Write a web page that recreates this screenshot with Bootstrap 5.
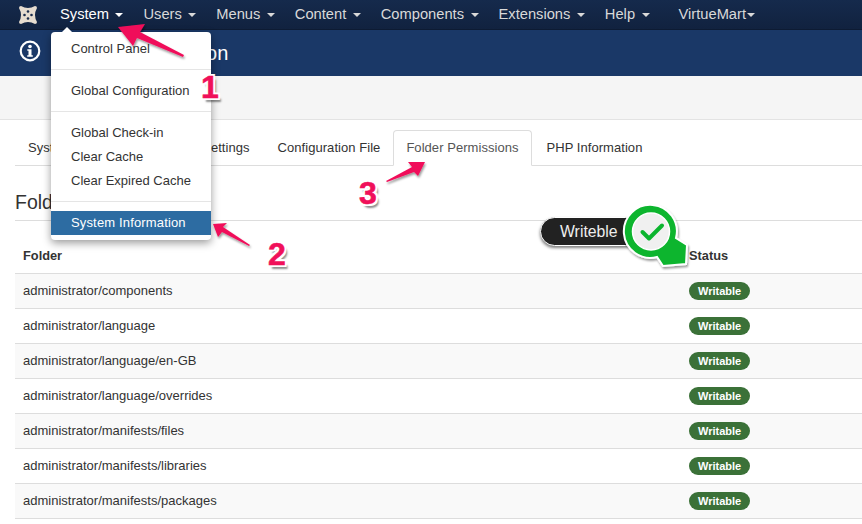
<!DOCTYPE html>
<html>
<head>
  <title>System Information</title>
  <link rel="stylesheet" href="https://cdn.jsdelivr.net/npm/bootstrap@5.3.0/dist/css/bootstrap.min.css">
  <style>
    html, body { height: 524px; overflow: hidden; }
    body { font-family: "Liberation Sans", Arial, sans-serif; font-size: 13px; color: #333; background: #fff; position: relative; }
    .top-bar { height: 30px; background: linear-gradient(#152a4c, #11223f); border-bottom: 1px solid #0d1b33; padding-left: 17px; }
    .top-bar .brand-mark { width: 22px; height: 22px; margin-right: 11px; }
    .top-link { color: #d9d9d9; font-size: 14.7px; line-height: 29px; padding: 0 10px; white-space: nowrap; text-decoration: none; }
    .top-link.is-open { color: #fff; }
    .top-link i { display: inline-block; border: 4px solid transparent; border-top-color: currentColor; border-bottom: 0; margin-left: 2.4px; vertical-align: 2px; }
    .top-link.vm { margin-left: 9px; }
    .top-link.vm i { margin-left: 1px; }
    .sub-head { height: 46px; background: #1a3867; color: #fff; padding-left: 19px; }
    .sub-head h1 { font-size: 20px; font-weight: 400; margin: 0 0 0 37px; line-height: 46px; }
    .sub-head svg { position: absolute; left: 19px; top: 40px; }
    .tool-strip { height: 44px; background: #f5f5f5; border-bottom: 1px solid #e3e3e3; }
    .page-body { padding: 10px 0 0 15px; }
    .tabs-row { height: 36px; border-bottom: 1px solid #ddd; margin: 0; flex-wrap: nowrap; padding: 0; list-style: none; gap: 2px; }
    .tabs-row li a { display: block; height: 36px; line-height: 33px; padding: 0 12px; font-size: 13px; letter-spacing: .05px; color: #3b6da6; text-decoration: none; white-space: nowrap; border: 1px solid transparent; }
    .tabs-row li:first-child a { padding-right: 15px; }
    .tabs-row li:nth-child(3) { margin-right: -2px; }
    .tabs-row li a.is-on { color: #555; background: #fff; border-color: #ddd; border-bottom-color: #fff; border-radius: 4px 4px 0 0; }
    .perm-title { font-size: 19.5px; font-weight: 400; line-height: 24px; margin: 24px 0 6px; color: #333; }
    .perm-table { width: 100%; border-top: 1px solid #ddd; margin: 0; font-size: 13px; color: #333; border-collapse: collapse; }
    .perm-table th { height: 53px; vertical-align: bottom; padding: 0 8px 8px; font-size: 12.8px; border-bottom: 1px solid #ddd; }
    .perm-table td { height: 35px; padding: 0 8px; border-bottom: 1px solid #ddd; vertical-align: middle; }
    .perm-table tbody tr:nth-child(odd) td { background: #f9f9f9; }
    .perm-table .stat-col { width: 181px; padding-left: 8px; }
    .ok-pill { display: inline-block; background: #3b7138; color: #fff; font-size: 11px; font-weight: 700; line-height: 18px; padding: 0 9px; border-radius: 9px; }
    .sys-menu { position: absolute; left: 51px; top: 32px; width: 160px; background: #fff; border-radius: 4px; box-shadow: 0 3px 8px rgba(0,0,0,.4); padding: 4px 0 5px; font-size: 13px; z-index: 3; }
    .sys-menu::before { content: ""; position: absolute; left: 10px; top: -5px; border: 6px solid transparent; border-top: 0; border-bottom-color: #fff; }
    .sys-menu a { display: block; padding: 2px 20px 0; line-height: 22px; color: #333; text-decoration: none; white-space: nowrap; }
    .sys-menu a.is-current { background: #2d6ca2; color: #fff; padding: 0 20px; line-height: 24px; letter-spacing: .15px; }
    .sys-menu hr { margin: 9px 0 8px; border: 0; border-top: 1px solid #e5e5e5; opacity: 1; }
    .sys-menu hr:last-of-type { margin-bottom: 9px; }
    .mark-layer { position: absolute; left: 0; top: 0; z-index: 5; pointer-events: none; }
    .step-num { position: absolute; z-index: 6; font-size: 32px; font-weight: 700; color: #f0105a; line-height: 1; -webkit-text-stroke: .6px #f0105a; text-shadow: -2px 0 0 #fff, 2px 0 0 #fff, 0 -2px 0 #fff, 0 2px 0 #fff, -2px -2px 0 #fff, 2px -2px 0 #fff, -2px 2px 0 #fff, 2px 2px 0 #fff, 3px 4px 2px rgba(0,0,0,.45); }
    .write-tag { position: absolute; z-index: 5; left: 540px; top: 217px; width: 100px; height: 29px; line-height: 27px; padding-left: 19px; background: #222; color: #eee; font-size: 15.8px; border: 1px solid #fff; border-radius: 15px; box-shadow: 0 2px 3px rgba(0,0,0,.5); }
  </style>
</head>
<body>
  <nav class="top-bar d-flex align-items-center">
    <svg class="brand-mark" viewBox="0 0 22 22"><path d="M4 2Q11 6 18 2Q20 2 20 4Q16 11 20 18Q20 20 18 20Q11 16 4 20Q2 20 2 18Q6 11 2 4Q2 2 4 2z" fill="#e6dccf"/><g fill="#1a2c4c"><circle cx="11" cy="7.500" r="1.300"/><circle cx="7.500" cy="11" r="1.300"/><circle cx="14.500" cy="11" r="1.300"/><circle cx="11" cy="14.500" r="1.300"/></g></svg>
    <a class="top-link is-open">System <i></i></a>
    <a class="top-link">Users <i></i></a>
    <a class="top-link">Menus <i></i></a>
    <a class="top-link">Content <i></i></a>
    <a class="top-link">Components <i></i></a>
    <a class="top-link">Extensions <i></i></a>
    <a class="top-link">Help <i></i></a>
    <a class="top-link vm">VirtueMart<i></i></a>
  </nav>
  <header class="sub-head">
    <svg width="22" height="22" viewBox="0 0 22 22"><circle cx="11" cy="11" r="9.300" fill="none" stroke="#fff" stroke-width="2.200"/><circle cx="11" cy="6.500" r="1.800" fill="#fff"/><path d="M8.300 9.300h4.200v5.900h1.300v1.500h-5.600v-1.500h1.300v-4.400h-1.200z" fill="#fff"/></svg>
    <h1>System Information</h1>
  </header>
  <div class="tool-strip"></div>
  <main class="page-body">
    <ul class="tabs-row d-flex">
      <li><a>System Information</a></li>
      <li><a>PHP Settings</a></li>
      <li><a>Configuration File</a></li>
      <li><a class="is-on">Folder Permissions</a></li>
      <li><a>PHP Information</a></li>
    </ul>
    <h3 class="perm-title">Folder Permissions</h3>
    <table class="perm-table">
      <thead><tr><th>Folder</th><th class="stat-col">Status</th></tr></thead>
      <tbody>
        <tr><td>administrator/components</td><td class="stat-col"><span class="ok-pill">Writable</span></td></tr>
        <tr><td>administrator/language</td><td class="stat-col"><span class="ok-pill">Writable</span></td></tr>
        <tr><td>administrator/language/en-GB</td><td class="stat-col"><span class="ok-pill">Writable</span></td></tr>
        <tr><td>administrator/language/overrides</td><td class="stat-col"><span class="ok-pill">Writable</span></td></tr>
        <tr><td>administrator/manifests/files</td><td class="stat-col"><span class="ok-pill">Writable</span></td></tr>
        <tr><td>administrator/manifests/libraries</td><td class="stat-col"><span class="ok-pill">Writable</span></td></tr>
        <tr><td>administrator/manifests/packages</td><td class="stat-col"><span class="ok-pill">Writable</span></td></tr>
      </tbody>
    </table>
  </main>

  <div class="sys-menu">
    <a>Control Panel</a>
    <hr>
    <a>Global Configuration</a>
    <hr>
    <a>Global Check-in</a>
    <a>Clear Cache</a>
    <a>Clear Expired Cache</a>
    <hr>
    <a class="is-current">System Information</a>
  </div>

  <div class="write-tag">Writeble</div>
  <svg class="mark-layer" width="862" height="524" viewBox="0 0 862 524">
    <defs><filter id="drop" x="-20%" y="-20%" width="140%" height="140%"><feDropShadow dx="1" dy="2" stdDeviation="1" flood-opacity=".4"/></filter></defs>
    <path d="M118 27L145 24 140 32 184 55 183 57 137 38 133 46z" fill="#f0105a" filter="url(#drop)"/>
    <path d="M213 224L227 223 223 227 250 245 249 246 222 232 218 237z" fill="#f0105a" filter="url(#drop)"/>
    <path d="M425 162L408 162 412 167 386 181 387 182 414 172 418 176z" fill="#f0105a" filter="url(#drop)"/>
    <path d="M657 257A26.500 26.500 0 1 1 676 238L687 245 686 264 663 266z" fill="#0cb52f" stroke="#fff" stroke-width="2" filter="url(#drop)"/>
    <circle cx="651" cy="231.500" r="18.500" fill="#f0f0f0" stroke="#fff" stroke-width="1.500"/>
    <path d="M642.500 232l6.500 6.500 13-13" fill="none" stroke="#0cb52f" stroke-width="4" stroke-linecap="round" stroke-linejoin="round"/>
  </svg>
  <div class="step-num" style="left:201px;top:71px">1</div>
  <div class="step-num" style="left:268px;top:238px">2</div>
  <div class="step-num" style="left:359px;top:177px">3</div>
</body>
</html>
